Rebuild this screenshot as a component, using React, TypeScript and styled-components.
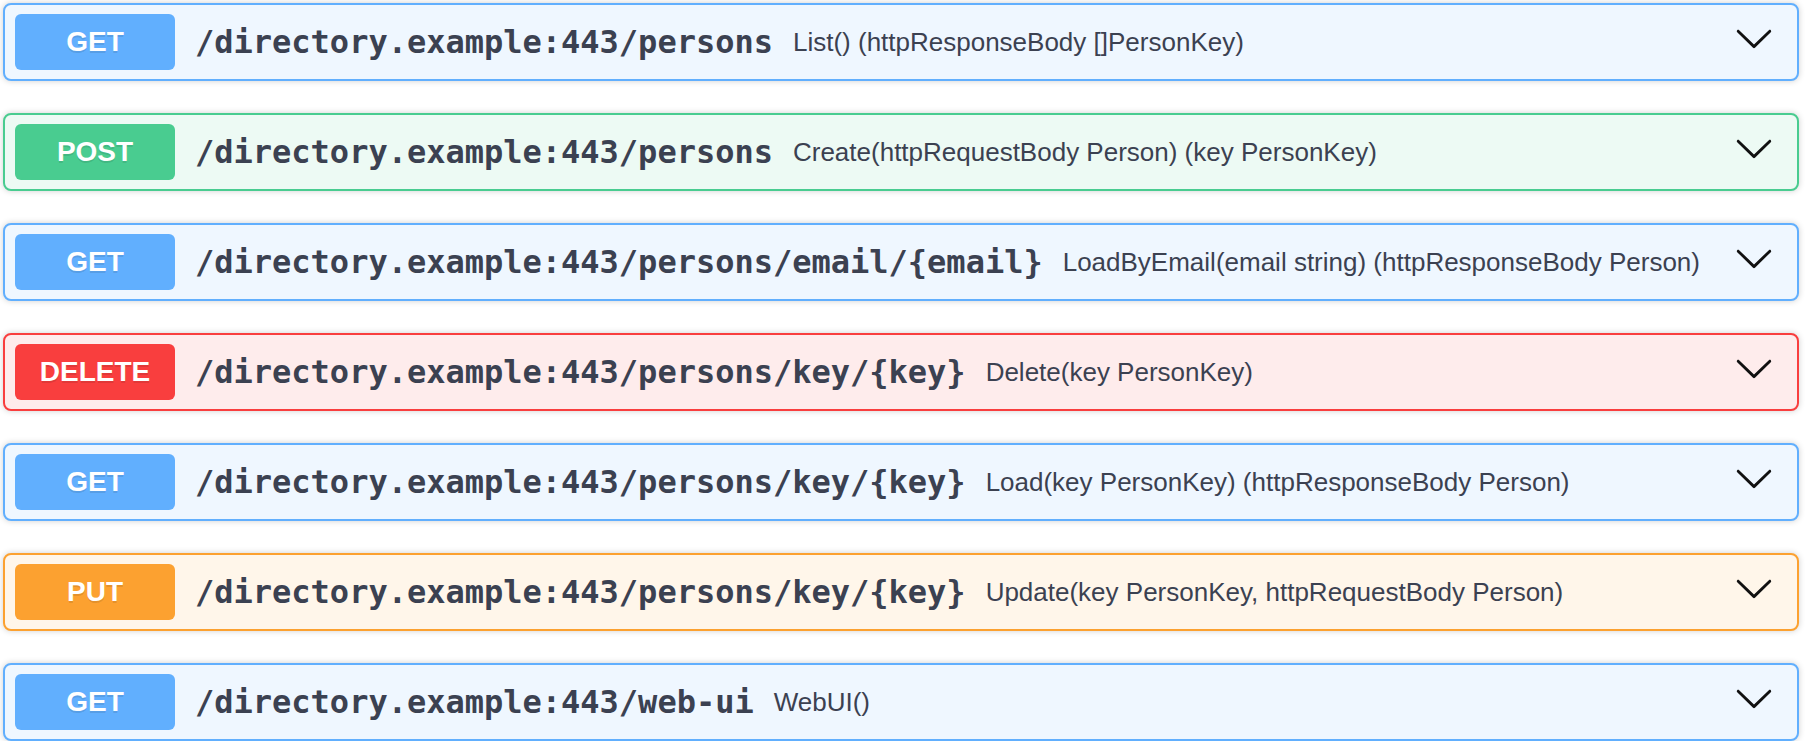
import React from "react";
import styled, { createGlobalStyle } from "styled-components";

const Global = createGlobalStyle`
  html, body { margin: 0; padding: 0; background: #fff; }
  body { font-family: "Liberation Sans", Arial, sans-serif; }
`;

type Method = "GET" | "POST" | "DELETE" | "PUT";

const colors: Record<Method, { main: string; bg: string }> = {
  GET: { main: "#61affe", bg: "#eff7ff" },
  POST: { main: "#49cc90", bg: "#edfaf4" },
  DELETE: { main: "#f93e3e", bg: "#feecec" },
  PUT: { main: "#fca130", bg: "#fff6ea" },
};

const Page = styled.div`
  display: flex;
  flex-direction: column;
  gap: 32px;
  padding: 3px 7px 0 3px;
`;

const Block = styled.div<{ $m: Method }>`
  display: flex;
  align-items: center;
  height: 78px;
  box-sizing: border-box;
  padding: 0 23px 0 10px;
  border: 2px solid ${(p) => colors[p.$m].main};
  border-radius: 8px;
  background: ${(p) => colors[p.$m].bg};
  box-shadow: 0 0 6px rgba(0, 0, 0, 0.19);
`;

const Badge = styled.span<{ $m: Method }>`
  flex: none;
  width: 160px;
  height: 56px;
  display: flex;
  align-items: center;
  justify-content: center;
  border-radius: 6px;
  background: ${(p) => colors[p.$m].main};
  color: #fff;
  font-family: "Liberation Sans", Arial, sans-serif;
  font-weight: 700;
  font-size: 28px;
  text-shadow: 0 2px 0 rgba(0, 0, 0, 0.1);
`;

const Path = styled.span`
  flex: none;
  padding: 0 20px;
  font-family: "DejaVu Sans Mono", monospace;
  font-weight: 700;
  font-size: 32px;
  color: #3b4151;
  white-space: nowrap;
`;

const Desc = styled.span`
  flex: 1 1 auto;
  font-family: "Liberation Sans", Arial, sans-serif;
  font-size: 26px;
  color: #3b4151;
  white-space: nowrap;
`;

const Arrow = styled.svg`
  flex: none;
  width: 40px;
  height: 40px;
  margin-bottom: 8px;
  fill: #111;
`;

const ops: { m: Method; path: string; desc: string }[] = [
  { m: "GET", path: "/directory.example:443/persons", desc: "List() (httpResponseBody []PersonKey)" },
  { m: "POST", path: "/directory.example:443/persons", desc: "Create(httpRequestBody Person) (key PersonKey)" },
  { m: "GET", path: "/directory.example:443/persons/email/{email}", desc: "LoadByEmail(email string) (httpResponseBody Person)" },
  { m: "DELETE", path: "/directory.example:443/persons/key/{key}", desc: "Delete(key PersonKey)" },
  { m: "GET", path: "/directory.example:443/persons/key/{key}", desc: "Load(key PersonKey) (httpResponseBody Person)" },
  { m: "PUT", path: "/directory.example:443/persons/key/{key}", desc: "Update(key PersonKey, httpRequestBody Person)" },
  { m: "GET", path: "/directory.example:443/web-ui", desc: "WebUI()" },
];

export default function App() {
  return (
    <>
      <Global />
      <Page>
        {ops.map((o, i) => (
          <Block key={i} $m={o.m}>
            <Badge $m={o.m}>{o.m}</Badge>
            <Path>{o.path}</Path>
            <Desc>{o.desc}</Desc>
            <Arrow viewBox="0 0 20 20" aria-hidden="true">
              <path d="M17.418 6.109c.272-.268.709-.268.979 0s.271.701 0 .969l-7.908 7.83c-.27.268-.707.268-.979 0l-7.908-7.83c-.27-.268-.27-.701 0-.969.271-.268.709-.268.979 0L10 13.25l7.418-7.141z" />
            </Arrow>
          </Block>
        ))}
      </Page>
    </>
  );
}
